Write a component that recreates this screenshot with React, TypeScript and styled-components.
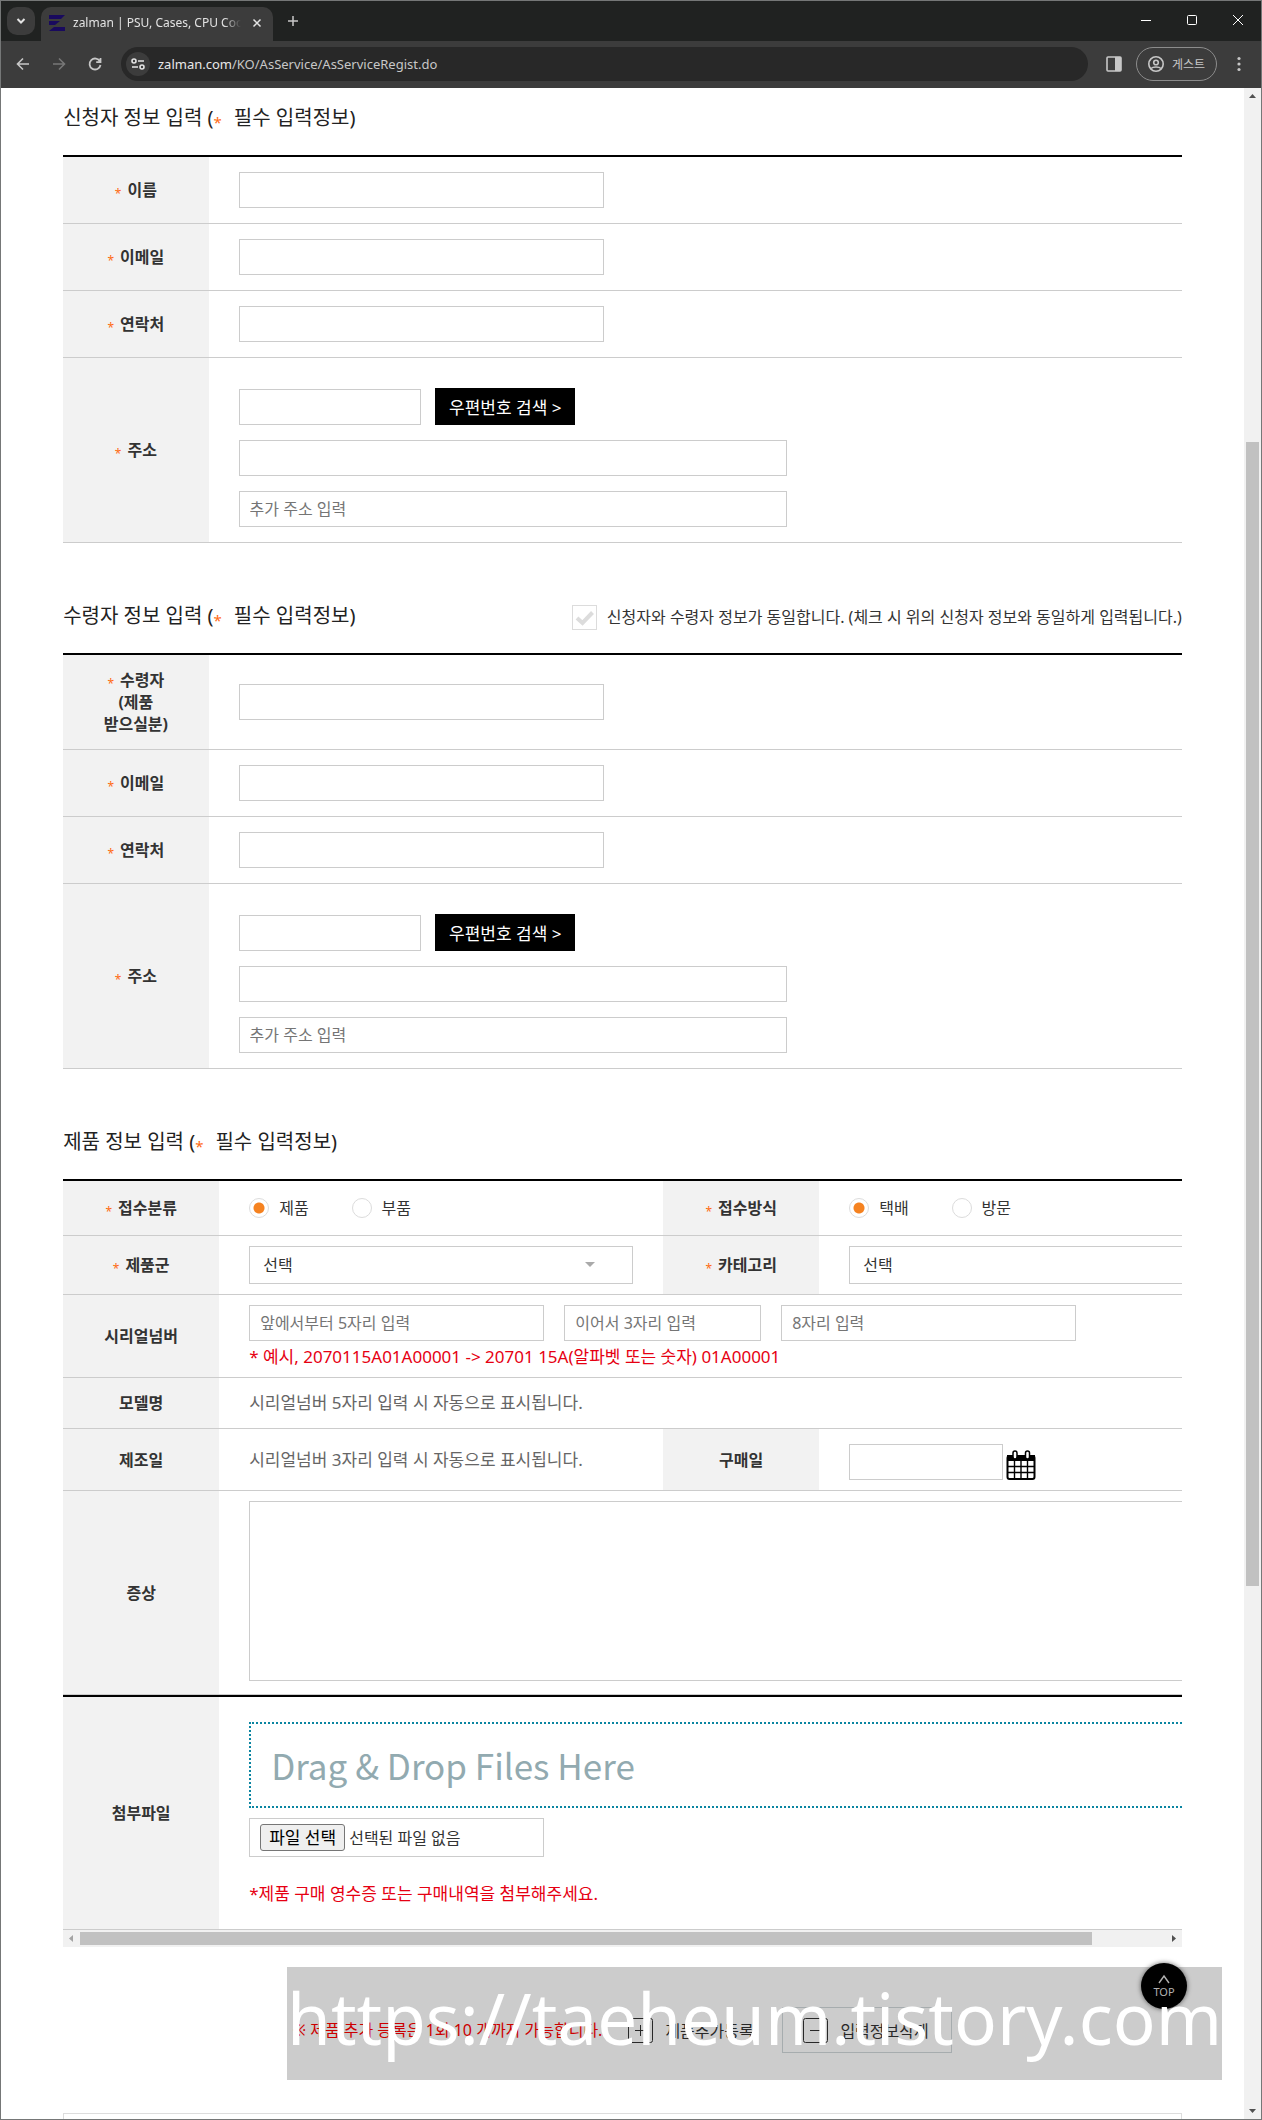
import React, { useState } from "react";
import styled, { createGlobalStyle, css } from "styled-components";

const GlobalStyle = createGlobalStyle`
  *, *::before, *::after { box-sizing: border-box; }
  body {
    margin: 0;
    background: #fff;
    color: #333;
    font-family: "Noto Sans", "Noto Sans CJK KR", sans-serif;
    font-size: 16px;
    line-height: 22px;
  }
  button, input, select, textarea {
    font-family: inherit;
    font-size: 16px;
    color: #333;
    border-radius: 0;
    margin: 0;
  }
`;

/* ---------- browser window ---------- */

const Window = styled.div`
  display: flex;
  flex-direction: column;
  min-height: 100vh;
  border: 1px solid #757777;
`;

const TabStrip = styled.div`
  display: flex;
  align-items: flex-end;
  height: 40px;
  padding-left: 6px;
  background: #202221;
`;

const TabSearch = styled.button`
  display: flex;
  align-items: center;
  justify-content: center;
  width: 28px;
  height: 28px;
  margin: 0 6px 6px 0;
  padding: 0;
  border: 0;
  border-radius: 10px;
  background: #3c3c3c;
`;

const Tab = styled.div`
  display: flex;
  align-items: center;
  gap: 8px;
  width: 232px;
  height: 34px;
  padding: 0 8px 2px;
  border-radius: 10px 10px 0 0;
  background: #3c3c3c;
`;

const TabTitle = styled.span`
  flex: 1;
  overflow: hidden;
  white-space: nowrap;
  font-family: "Noto Sans", sans-serif;
  font-size: 12px;
  line-height: 18px;
  color: #e3e3e3;
  mask-image: linear-gradient(to right, #000 90%, transparent);
`;

const PlainButton = styled.button`
  display: flex;
  align-items: center;
  justify-content: center;
  flex: none;
  padding: 0;
  border: 0;
  background: none;
`;

const TabClose = styled(PlainButton)`
  width: 16px;
  height: 16px;
`;

const NewTab = styled(PlainButton)`
  width: 28px;
  height: 28px;
  margin: 0 0 6px 6px;
`;

const WindowButtons = styled.div`
  display: flex;
  align-self: stretch;
  margin-left: auto;
`;

const WindowButton = styled(PlainButton)`
  width: 46px;
  height: 38px;
`;

const Toolbar = styled.div`
  display: flex;
  align-items: center;
  height: 47px;
  padding: 0 4px 1px;
  background: #3c3c3c;
`;

const NavButton = styled(PlainButton)`
  width: 36px;
  height: 36px;
`;

const Omnibox = styled.div`
  display: flex;
  align-items: center;
  flex: 1;
  gap: 8px;
  height: 34px;
  margin: 0 8px;
  padding: 0 5px;
  border-radius: 17px;
  background: #282828;
`;

const SiteInfo = styled(PlainButton)`
  width: 24px;
  height: 24px;
  border-radius: 50%;
  background: #3c3c3c;
`;

const Url = styled.span`
  font-family: "Noto Sans", sans-serif;
  font-size: 13px;
  line-height: 18px;
  color: #c7c7c7;

  b {
    font-weight: 400;
    color: #e8e8e8;
  }
`;

const SidePanelButton = styled(PlainButton)`
  width: 36px;
  height: 36px;
`;

const Profile = styled.button`
  display: flex;
  align-items: center;
  justify-content: center;
  gap: 8px;
  width: 81px;
  height: 34px;
  margin: 0 4px;
  padding: 0;
  border: 1px solid #8c8c8c;
  border-radius: 17px;
  background: none;
  color: #c7c7c7;
  font-size: 12px;
`;

const MenuButton = styled(PlainButton)`
  width: 36px;
  height: 36px;
`;

const Viewport = styled.div`
  display: flex;
  flex: 1;
`;

const Page = styled.main`
  position: relative;
  display: flex;
  flex: 1;
  flex-direction: column;
  min-width: 0;
  background: #fff;
`;

const Content = styled.form`
  display: flex;
  flex: 1;
  flex-direction: column;
  width: 90%;
  margin: 0 auto;
`;

const VerticalBar = styled.div`
  display: flex;
  flex-direction: column;
  flex: none;
  width: 17px;
  background: #f1f1f1;
`;

const BarArrow = styled.span`
  display: flex;
  align-items: center;
  justify-content: center;
  flex: none;
  width: 17px;
  height: 17px;
`;

const BarPart = styled.span<{ $share: number; $thumb?: boolean; $across?: boolean }>`
  flex: ${(p) => p.$share} 1 0;
  margin: ${(p) => (p.$across ? "2px 0" : "0 2px")};
  background: ${(p) => (p.$thumb ? "#c1c1c1" : "transparent")};
`;

/* ---------- form ---------- */

const Section = styled.section`
  & + & {
    margin-top: 43px;
  }
`;

const SectionHead = styled.div`
  display: flex;
  justify-content: space-between;
  padding: 17px 0 24px;
`;

const Title = styled.h2`
  margin: 0;
  font-size: 20px;
  font-weight: 400;
  line-height: 26px;
  color: #222;
`;

const Star = styled.span<{ $wide?: boolean }>`
  display: inline-block;
  margin-right: ${(p) => (p.$wide ? "12px" : "6px")};
  vertical-align: ${(p) => (p.$wide ? "-3px" : "-2px")};
  font-size: ${(p) => (p.$wide ? "15px" : "12px")};
  font-weight: 400;
  line-height: 12px;
  color: #ff6a13;
`;

const SameCheck = styled.label`
  display: flex;
  align-items: center;
  gap: 10px;
  height: 28px;
  margin-bottom: -2px;
`;

const CheckBox = styled.input`
  appearance: none;
  width: 25px;
  height: 25px;
  border: 1px solid #dcdcdc;
  background: #fff;
`;

const CheckWrap = styled.span`
  position: relative;
  display: flex;

  svg {
    position: absolute;
    inset: 0;
    pointer-events: none;
  }
`;

const Table = styled.table<{ $min?: number }>`
  width: 100%;
  min-width: ${(p) => (p.$min ? `${p.$min}px` : "0")};
  table-layout: fixed;
  border-collapse: separate;
  border-spacing: 0;
  border-top: 2px solid #000;
`;

const Col = styled.col<{ $width?: string }>`
  width: ${(p) => p.$width ?? "auto"};
`;

const Th = styled.th`
  padding: 14px 10px;
  border-bottom: 1px solid #ccc;
  background: #f2f2f2;
  font-size: 16px;
  font-weight: 700;
  line-height: 22px;
  text-align: center;
  color: #333;
`;

const Td = styled.td<{ $top?: number; $bottom?: number }>`
  padding: ${(p) => p.$top ?? 10}px 30px ${(p) => p.$bottom ?? p.$top ?? 10}px;
  border-bottom: 1px solid #ccc;
`;

const TextInput = styled.input<{ $width?: string }>`
  display: block;
  width: ${(p) => p.$width ?? "40%"};
  height: 36px;
  padding: 0 10px;
  border: 1px solid #ccc;
  background: #fff;

  &::placeholder {
    color: #757575;
  }
`;

const Address = styled.div`
  display: flex;
  flex-direction: column;
  gap: 15px;
`;

const ZipRow = styled.div`
  display: flex;
  align-items: flex-end;
  gap: 14px;
`;

const ZipButton = styled.button`
  width: 140px;
  height: 37px;
  padding: 0;
  border: 0;
  background: #000;
  color: #fff;
  font-size: 17px;
`;

const Scroller = styled.div`
  overflow: hidden;
`;

const HorizontalBar = styled.div`
  display: flex;
  height: 17px;
  background: #f1f1f1;
`;

const Radios = styled.div`
  display: flex;
  gap: 43px;
`;

const RadioLabel = styled.label`
  display: flex;
  align-items: center;
  gap: 10px;
`;

const Radio = styled.input`
  appearance: none;
  width: 20px;
  height: 20px;
  border: 1px solid #dcdcdc;
  border-radius: 50%;
  background: #fff;

  &:checked {
    background: radial-gradient(circle, #f58220 0 5px, #fff 6px);
  }
`;

const SelectBox = styled.div`
  position: relative;

  &::after {
    content: "";
    position: absolute;
    top: 16px;
    right: 38px;
    border: 5px solid transparent;
    border-top-color: #aaa;
    border-bottom: 0;
    pointer-events: none;
  }
`;

const Select = styled.select`
  display: block;
  appearance: none;
  width: 100%;
  height: 38px;
  padding: 0 13px;
  border: 1px solid #ccc;
  background: #fff;
`;

const SerialRow = styled.div`
  display: flex;
  gap: 20px;
`;

const noteStyle = css`
  margin: 0;
  color: #e60012;
  font-size: 17px;
`;

const SerialNote = styled.p`
  ${noteStyle}
  margin-top: 6px;
  line-height: 20px;
`;

const Auto = styled.span`
  font-size: 17px;
  color: #666;
`;

const DateRow = styled.div`
  display: flex;
  align-items: flex-end;
  gap: 3px;
`;

const TextArea = styled.textarea`
  display: block;
  width: 100%;
  height: 180px;
  padding: 10px;
  border: 1px solid #ccc;
  background: #fff;
  resize: none;
`;

const DropZone = styled.div`
  display: flex;
  align-items: center;
  height: 86px;
  padding-left: 20px;
  border: 2px dotted #0b85a1;
  color: #92aab0;
  font-family: "Noto Sans CJK KR", sans-serif;
  font-size: 35px;
  line-height: 44px;
`;

const FileBox = styled.label`
  display: flex;
  align-items: center;
  gap: 4px;
  width: 295px;
  height: 39px;
  margin-top: 10px;
  padding-left: 10px;
  border: 1px solid #ccc;
`;

const FileInput = styled.input`
  position: absolute;
  width: 1px;
  height: 1px;
  opacity: 0;
`;

const FileButton = styled.span`
  width: 85px;
  height: 27px;
  border: 1px solid #767676;
  border-radius: 3px;
  background: #efefef;
  color: #000;
  font-size: 17px;
  line-height: 26px;
  text-align: center;
`;

const FileNote = styled.p`
  ${noteStyle}
  margin-top: 26px;
  line-height: 22px;
`;

const Actions = styled.div`
  display: flex;
  align-items: center;
  justify-content: center;
  gap: 5px;
  margin: 60px 0;
`;

const LimitNote = styled.p`
  margin: 0;
  color: #ff0000;
`;

const ActionButton = styled.button<{ $outlined?: boolean }>`
  display: flex;
  align-items: center;
  gap: 12px;
  width: 170px;
  height: 46px;
  padding: 0 0 0 20px;
  border: 1px solid ${(p) => (p.$outlined ? "#d0d8da" : "transparent")};
  background: none;
`;

const NextBox = styled.div`
  flex: 1;
  border: 1px solid #ddd;
  border-bottom: 0;
`;

const TopLink = styled.a`
  position: absolute;
  right: 57px;
  bottom: 110px;
  display: flex;
  flex-direction: column;
  align-items: center;
  justify-content: center;
  width: 46px;
  height: 46px;
  border-radius: 50%;
  background: #000;
  box-shadow: 0 0 5px rgba(0, 0, 0, 0.6);
  color: #ddd;
  font-size: 11px;
  line-height: 14px;
  text-decoration: none;
`;

const Watermark = styled.div`
  position: absolute;
  right: 22px;
  bottom: 39px;
  width: 935px;
  height: 113px;
  background: rgba(0, 0, 0, 0.2);
  color: #fff;
  font-family: "Noto Sans", sans-serif;
  font-size: 71px;
  line-height: 102px;
  text-align: center;
  white-space: nowrap;
  pointer-events: none;
`;

/* ---------- drawings ---------- */

type ArrowProps = { dir: "up" | "down" | "left" | "right"; color?: string };

const arrowPaths = {
  up: "M1 6 L4.5 2 L8 6Z",
  down: "M1 3 L4.5 7 L8 3Z",
  left: "M6 1 L2 4.5 L6 8Z",
  right: "M3 1 L7 4.5 L3 8Z",
};

const Arrow = ({ dir, color = "#505050" }: ArrowProps) => (
  <svg width="9" height="9" viewBox="0 0 9 9" aria-hidden="true">
    <path d={arrowPaths[dir]} fill={color} />
  </svg>
);

const Stroke = ({ size, d, color = "#c7c7c7", width = 2 }: { size: number; d: string; color?: string; width?: number }) => (
  <svg width={size} height={size} viewBox={`0 0 ${size} ${size}`} fill="none" stroke={color} strokeWidth={width} aria-hidden="true">
    <path d={d} />
  </svg>
);

const Favicon = () => (
  <svg width="16" height="16" viewBox="0 0 16 16" fill="#190a5e" aria-hidden="true">
    <path d="M0 0H16L12 4H0Z M0 6H11L6 10H0Z M5 12H16V16H0Z" />
  </svg>
);

const CalendarIcon = () => (
  <svg width="30" height="30" viewBox="0 0 30 30" aria-hidden="true">
    <rect x="1.5" y="6" width="27" height="23" rx="2" fill="#fff" stroke="#000" strokeWidth="2" />
    <path d="M1 5h28v6H1z" fill="#000" />
    <path d="M2 16.500h26M2 22.500h26M8.500 10v18M15 10v18M21.500 10v18" stroke="#000" strokeWidth="1.400" />
    <rect x="7" y="1" width="4" height="8" rx="2" fill="#fff" stroke="#000" strokeWidth="1.500" />
    <rect x="19.500" y="1" width="4" height="8" rx="2" fill="#fff" stroke="#000" strokeWidth="1.500" />
  </svg>
);

const BoxIcon = ({ plus }: { plus?: boolean }) => (
  <svg width="25" height="25" viewBox="0 0 25 25" fill="none" stroke="#333" aria-hidden="true">
    <rect x="0.500" y="0.500" width="24" height="24" rx="2" />
    <path d={plus ? "M7 12.500h11M12.500 7v11" : "M7 12.500h11"} />
  </svg>
);

/* ---------- pieces ---------- */

const Chrome = () => (
  <>
    <TabStrip>
      <TabSearch aria-label="탭 검색">
        <Stroke size={10} d="M1.500 3 L5 6.500 L8.500 3" color="#e3e3e3" />
      </TabSearch>
      <Tab>
        <Favicon />
        <TabTitle>zalman | PSU, Cases, CPU Coolers</TabTitle>
        <TabClose aria-label="탭 닫기">
          <Stroke size={10} d="M1.500 1.500 L8.500 8.500 M8.500 1.500 L1.500 8.500" color="#e3e3e3" width={1.5} />
        </TabClose>
      </Tab>
      <NewTab aria-label="새 탭">
        <Stroke size={12} d="M6 1 V11 M1 6 H11" width={1.5} />
      </NewTab>
      <WindowButtons>
        <WindowButton aria-label="최소화">
          <Stroke size={10} d="M0 5.500 H10" color="#fff" width={1} />
        </WindowButton>
        <WindowButton aria-label="최대화">
          <svg width="10" height="10" viewBox="0 0 10 10" fill="none" stroke="#fff" aria-hidden="true">
            <rect x="0.500" y="0.500" width="9" height="9" rx="1" />
          </svg>
        </WindowButton>
        <WindowButton aria-label="닫기">
          <Stroke size={10} d="M0 0 L10 10 M10 0 L0 10" color="#fff" width={1} />
        </WindowButton>
      </WindowButtons>
    </TabStrip>
    <Toolbar>
      <NavButton aria-label="뒤로">
        <Stroke size={16} d="M14 8 H3 M8 2.500 L2.500 8 L8 13.500" width={1.6} />
      </NavButton>
      <NavButton aria-label="앞으로">
        <Stroke size={16} d="M2 8 H13 M8 2.500 L13.500 8 L8 13.500" width={1.6} color="#777" />
      </NavButton>
      <NavButton aria-label="새로고침">
        <Stroke size={16} d="M13 5.500 A5.500 5.500 0 1 0 13.500 9 M13.500 2 V6.200 H9.200" width={1.8} />
      </NavButton>
      <Omnibox>
        <SiteInfo aria-label="사이트 정보">
          <svg width="14" height="12" viewBox="0 0 14 12" fill="none" stroke="#e3e3e3" strokeWidth="1.600" aria-hidden="true">
            <circle cx="3" cy="3" r="2" />
            <path d="M7 3h6M1 9h6" />
            <circle cx="11" cy="9" r="2" />
          </svg>
        </SiteInfo>
        <Url>
          <b>zalman.com</b>/KO/AsService/AsServiceRegist.do
        </Url>
      </Omnibox>
      <SidePanelButton aria-label="측면 패널">
        <svg width="16" height="16" viewBox="0 0 16 16" aria-hidden="true">
          <rect x="1" y="1" width="14" height="14" rx="1" fill="none" stroke="#c7c7c7" strokeWidth="1.600" />
          <path d="M9 1h6v14H9z" fill="#c7c7c7" />
        </svg>
      </SidePanelButton>
      <Profile>
        <svg width="16" height="16" viewBox="0 0 16 16" fill="none" stroke="#c7c7c7" strokeWidth="1.600" aria-hidden="true">
          <circle cx="8" cy="8" r="7.200" />
          <circle cx="8" cy="6.500" r="2.300" />
          <path d="M3 12.500 C5 10.500 11 10.500 13 12.500" />
        </svg>
        게스트
      </Profile>
      <MenuButton aria-label="메뉴">
        <svg width="4" height="16" viewBox="0 0 4 16" fill="#c7c7c7" aria-hidden="true">
          <circle cx="2" cy="2.500" r="1.600" />
          <circle cx="2" cy="8" r="1.600" />
          <circle cx="2" cy="13.500" r="1.600" />
        </svg>
      </MenuButton>
    </Toolbar>
  </>
);

const Heading = ({ children }: { children: string }) => (
  <Title>
    {children} (<Star $wide>*</Star>필수 입력정보)
  </Title>
);

const Required = ({ id, children }: { id?: string; children: React.ReactNode }) => (
  <label htmlFor={id}>
    <Star>*</Star>
    {children}
  </label>
);

const FieldRow = ({ id, label }: { id: string; label: React.ReactNode }) => (
  <tr>
    <Th scope="row">
      <Required id={id}>{label}</Required>
    </Th>
    <Td $top={15}>
      <TextInput id={id} type="text" />
    </Td>
  </tr>
);

const AddressRow = ({ id }: { id: string }) => (
  <tr>
    <Th scope="row">
      <Required id={id}>주소</Required>
    </Th>
    <Td $top={30} $bottom={15}>
      <Address>
        <ZipRow>
          <TextInput id={id} type="text" $width="20%" />
          <ZipButton type="button">우편번호 검색 &gt;</ZipButton>
        </ZipRow>
        <TextInput type="text" aria-label="주소" $width="60%" />
        <TextInput type="text" aria-label="추가 주소" placeholder="추가 주소 입력" $width="60%" />
      </Address>
    </Td>
  </tr>
);

const RadioGroup = ({ name, options }: { name: string; options: string[] }) => (
  <Radios>
    {options.map((option, i) => (
      <RadioLabel key={option}>
        <Radio type="radio" name={name} defaultChecked={i === 0} />
        {option}
      </RadioLabel>
    ))}
  </Radios>
);

const Picker = ({ id }: { id: string }) => (
  <SelectBox>
    <Select id={id}>
      <option>선택</option>
    </Select>
  </SelectBox>
);

export default function App() {
  const [same, setSame] = useState(false);

  return (
    <>
      <GlobalStyle />
      <Window>
        <Chrome />
        <Viewport>
          <Page>
            <Content>
              <Section>
                <SectionHead>
                  <Heading>신청자 정보 입력</Heading>
                </SectionHead>
                <Table>
                  <colgroup>
                    <Col $width="13%" />
                    <Col />
                  </colgroup>
                  <tbody>
                    <FieldRow id="name" label="이름" />
                    <FieldRow id="email" label="이메일" />
                    <FieldRow id="phone" label="연락처" />
                    <AddressRow id="zip" />
                  </tbody>
                </Table>
              </Section>

              <Section>
                <SectionHead>
                  <Heading>수령자 정보 입력</Heading>
                  <SameCheck>
                    <CheckWrap>
                      <CheckBox type="checkbox" checked={same} onChange={(e) => setSame(e.target.checked)} />
                      <Stroke size={25} d="M5 13 L10.500 18 L20.500 7.500" color={same ? "#333" : "#dcdcdc"} width={4} />
                    </CheckWrap>
                    신청자와 수령자 정보가 동일합니다. (체크 시 위의 신청자 정보와 동일하게 입력됩니다.)
                  </SameCheck>
                </SectionHead>
                <Table>
                  <colgroup>
                    <Col $width="13%" />
                    <Col />
                  </colgroup>
                  <tbody>
                    <FieldRow
                      id="receiver"
                      label={
                        <>
                          수령자
                          <br />
                          (제품
                          <br />
                          받으실분)
                        </>
                      }
                    />
                    <FieldRow id="receiver-email" label="이메일" />
                    <FieldRow id="receiver-phone" label="연락처" />
                    <AddressRow id="receiver-zip" />
                  </tbody>
                </Table>
              </Section>

              <Section>
                <SectionHead>
                  <Heading>제품 정보 입력</Heading>
                </SectionHead>
                <Scroller>
                  <Table $min={1200}>
                    <colgroup>
                      <Col $width="13%" />
                      <Col />
                      <Col $width="13%" />
                      <Col />
                    </colgroup>
                    <tbody>
                      <tr>
                        <Th scope="row"><Required>접수분류</Required></Th>
                        <Td $top={16}><RadioGroup name="kind" options={["제품", "부품"]} /></Td>
                        <Th scope="row"><Required>접수방식</Required></Th>
                        <Td $top={16}><RadioGroup name="method" options={["택배", "방문"]} /></Td>
                      </tr>
                      <tr>
                        <Th scope="row"><Required id="group">제품군</Required></Th>
                        <Td><Picker id="group" /></Td>
                        <Th scope="row"><Required id="category">카테고리</Required></Th>
                        <Td><Picker id="category" /></Td>
                      </tr>
                      <tr>
                        <Th scope="row"><label htmlFor="serial">시리얼넘버</label></Th>
                        <Td colSpan={3}>
                          <SerialRow>
                            <TextInput id="serial" type="text" placeholder="앞에서부터 5자리 입력" $width="30%" />
                            <TextInput type="text" aria-label="시리얼넘버 3자리" placeholder="이어서 3자리 입력" $width="20%" />
                            <TextInput type="text" aria-label="시리얼넘버 8자리" placeholder="8자리 입력" $width="30%" />
                          </SerialRow>
                          <SerialNote>* 예시, 2070115A01A00001 -&gt; 20701 15A(알파벳 또는 숫자) 01A00001</SerialNote>
                        </Td>
                      </tr>
                      <tr>
                        <Th scope="row">모델명</Th>
                        <Td colSpan={3}><Auto>시리얼넘버 5자리 입력 시 자동으로 표시됩니다.</Auto></Td>
                      </tr>
                      <tr>
                        <Th scope="row">제조일</Th>
                        <Td><Auto>시리얼넘버 3자리 입력 시 자동으로 표시됩니다.</Auto></Td>
                        <Th scope="row"><label htmlFor="bought">구매일</label></Th>
                        <Td $top={15} $bottom={10}>
                          <DateRow>
                            <TextInput id="bought" type="text" />
                            <PlainButton type="button" aria-label="날짜 선택"><CalendarIcon /></PlainButton>
                          </DateRow>
                        </Td>
                      </tr>
                      <tr>
                        <Th scope="row"><label htmlFor="symptom">증상</label></Th>
                        <Td colSpan={3} $top={10} $bottom={13}><TextArea id="symptom" /></Td>
                      </tr>
                    </tbody>
                  </Table>
                  <Table $min={1200}>
                    <colgroup>
                      <Col $width="13%" />
                      <Col />
                    </colgroup>
                    <tbody>
                      <tr>
                        <Th scope="row">첨부파일</Th>
                        <Td $top={25} $bottom={24}>
                          <DropZone>Drag &amp; Drop Files Here</DropZone>
                          <FileBox>
                            <FileInput type="file" />
                            <FileButton>파일 선택</FileButton>
                            선택된 파일 없음
                          </FileBox>
                          <FileNote>*제품 구매 영수증 또는 구매내역을 첨부해주세요.</FileNote>
                        </Td>
                      </tr>
                    </tbody>
                  </Table>
                </Scroller>
                <HorizontalBar aria-hidden="true">
                  <BarArrow><Arrow dir="left" color="#a3a3a3" /></BarArrow>
                  <BarPart $share={1012} $thumb $across />
                  <BarPart $share={73} $across />
                  <BarArrow><Arrow dir="right" /></BarArrow>
                </HorizontalBar>
              </Section>

              <Actions>
                <LimitNote>※ 제품 추가 등록은 1회 10 개까지 가능합니다.</LimitNote>
                <ActionButton type="button"><BoxIcon plus />제품추가등록</ActionButton>
                <ActionButton type="button" $outlined><BoxIcon />입력정보삭제</ActionButton>
              </Actions>
              <NextBox />
            </Content>
            <TopLink href="#top">
              <Stroke size={12} d="M1 10 L6 3 L11 10" color="#ddd" width={1.4} />
              TOP
            </TopLink>
            <Watermark>https://taeheum.tistory.com</Watermark>
          </Page>
          <VerticalBar aria-hidden="true">
            <BarArrow><Arrow dir="up" /></BarArrow>
            <BarPart $share={337} />
            <BarPart $share={1144} $thumb />
            <BarPart $share={516} />
            <BarArrow><Arrow dir="down" /></BarArrow>
          </VerticalBar>
        </Viewport>
      </Window>
    </>
  );
}
